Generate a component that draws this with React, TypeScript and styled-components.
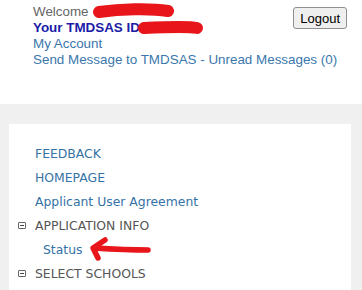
import React from "react";
import styled, { createGlobalStyle } from "styled-components";

const Global = createGlobalStyle`
  html, body { margin: 0; padding: 0; background: #ffffff; }
  body { width: 362px; height: 290px; overflow: hidden; }
`;

const Page = styled.div`
  display: flex;
  flex-direction: column;
  width: 362px;
  height: 290px;
  position: relative;
  overflow: hidden;
`;

const Header = styled.div`
  display: grid;
  grid-template-columns: 1fr;
  height: 104px;
  padding: 4px 15px 0 33px;
  box-sizing: border-box;
  font-family: "Liberation Sans", Arial, sans-serif;
  font-size: 13.4px;
  line-height: 16px;
  white-space: nowrap;
`;

const Info = styled.div`
  grid-area: 1 / 1;
  display: flex;
  flex-direction: column;
`;

const Welcome = styled.div`
  color: #666666;
`;

const IdLine = styled.div`
  color: #1c1ca8;
  font-weight: bold;
`;

const HeadLink = styled.a`
  color: #3a77ad;
  text-decoration: none;
`;

const LogoutButton = styled.button`
  grid-area: 1 / 1;
  justify-self: end;
  align-self: start;
  margin-top: 3px;
  height: 22px;
  padding: 0 6px;
  font-family: "Liberation Sans", Arial, sans-serif;
  font-size: 13px;
  color: #000;
  background: #efefef;
  border: 1px solid #8f8f8f;
  border-radius: 3px;
`;

const Band = styled.div`
  flex: 1;
  background: #f0f0f0;
  padding: 20px 11px 0 9px;
  display: flex;
`;

const Panel = styled.div`
  flex: 1;
  background: #ffffff;
  padding: 17px 0 0 26px;
  display: flex;
  flex-direction: column;
  font-family: "DejaVu Sans", Verdana, sans-serif;
  font-size: 12.4px;
`;

const Row = styled.div<{ $indent?: number }>`
  height: 24px;
  display: flex;
  align-items: center;
  padding-left: ${(p) => p.$indent ?? 0}px;
`;

const MenuLink = styled.a`
  color: #3572a6;
  text-decoration: none;
`;

const Section = styled.span`
  color: #555555;
`;

const Toggle = styled.span`
  width: 6px;
  height: 5px;
  border: 1px solid #666;
  border-radius: 1px;
  margin-left: -17px;
  margin-right: 9px;
  display: inline-flex;
  align-items: center;
  justify-content: center;
  &::after {
    content: "";
    width: 4px;
    height: 1px;
    background: #444;
  }
`;

const Scribble = styled.svg`
  position: absolute;
  left: 0;
  top: 0;
  pointer-events: none;
`;

export default function App() {
  return (
    <Page>
      <Global />
      <Header>
        <Info>
          <Welcome>Welcome</Welcome>
          <IdLine>Your TMDSAS ID</IdLine>
          <HeadLink href="#">My Account</HeadLink>
          <HeadLink href="#">Send Message to TMDSAS - Unread Messages (0)</HeadLink>
        </Info>
        <LogoutButton>Logout</LogoutButton>
      </Header>
      <Band>
        <Panel>
          <Row><MenuLink href="#">FEEDBACK</MenuLink></Row>
          <Row><MenuLink href="#">HOMEPAGE</MenuLink></Row>
          <Row><MenuLink href="#">Applicant User Agreement</MenuLink></Row>
          <Row><Toggle /><Section>APPLICATION INFO</Section></Row>
          <Row $indent={8}><MenuLink href="#">Status</MenuLink></Row>
          <Row><Toggle /><Section>SELECT SCHOOLS</Section></Row>
        </Panel>
      </Band>
      <Scribble width="362" height="290" viewBox="0 0 362 290">
        <path d="M99 12 C120 9 150 8 168 11" stroke="#e8151b" strokeWidth="12" strokeLinecap="round" fill="none" />
        <path d="M144 28 C165 27 188 26 197 28" stroke="#e8151b" strokeWidth="12" strokeLinecap="round" fill="none" />
        <path d="M148 250 C130 250 110 249 94 248" stroke="#e8151b" strokeWidth="5.5" strokeLinecap="round" fill="none" />
        <path d="M105 240 L93 248 L98 258" stroke="#e8151b" strokeWidth="5.5" strokeLinecap="round" strokeLinejoin="round" fill="none" />
      </Scribble>
    </Page>
  );
}
